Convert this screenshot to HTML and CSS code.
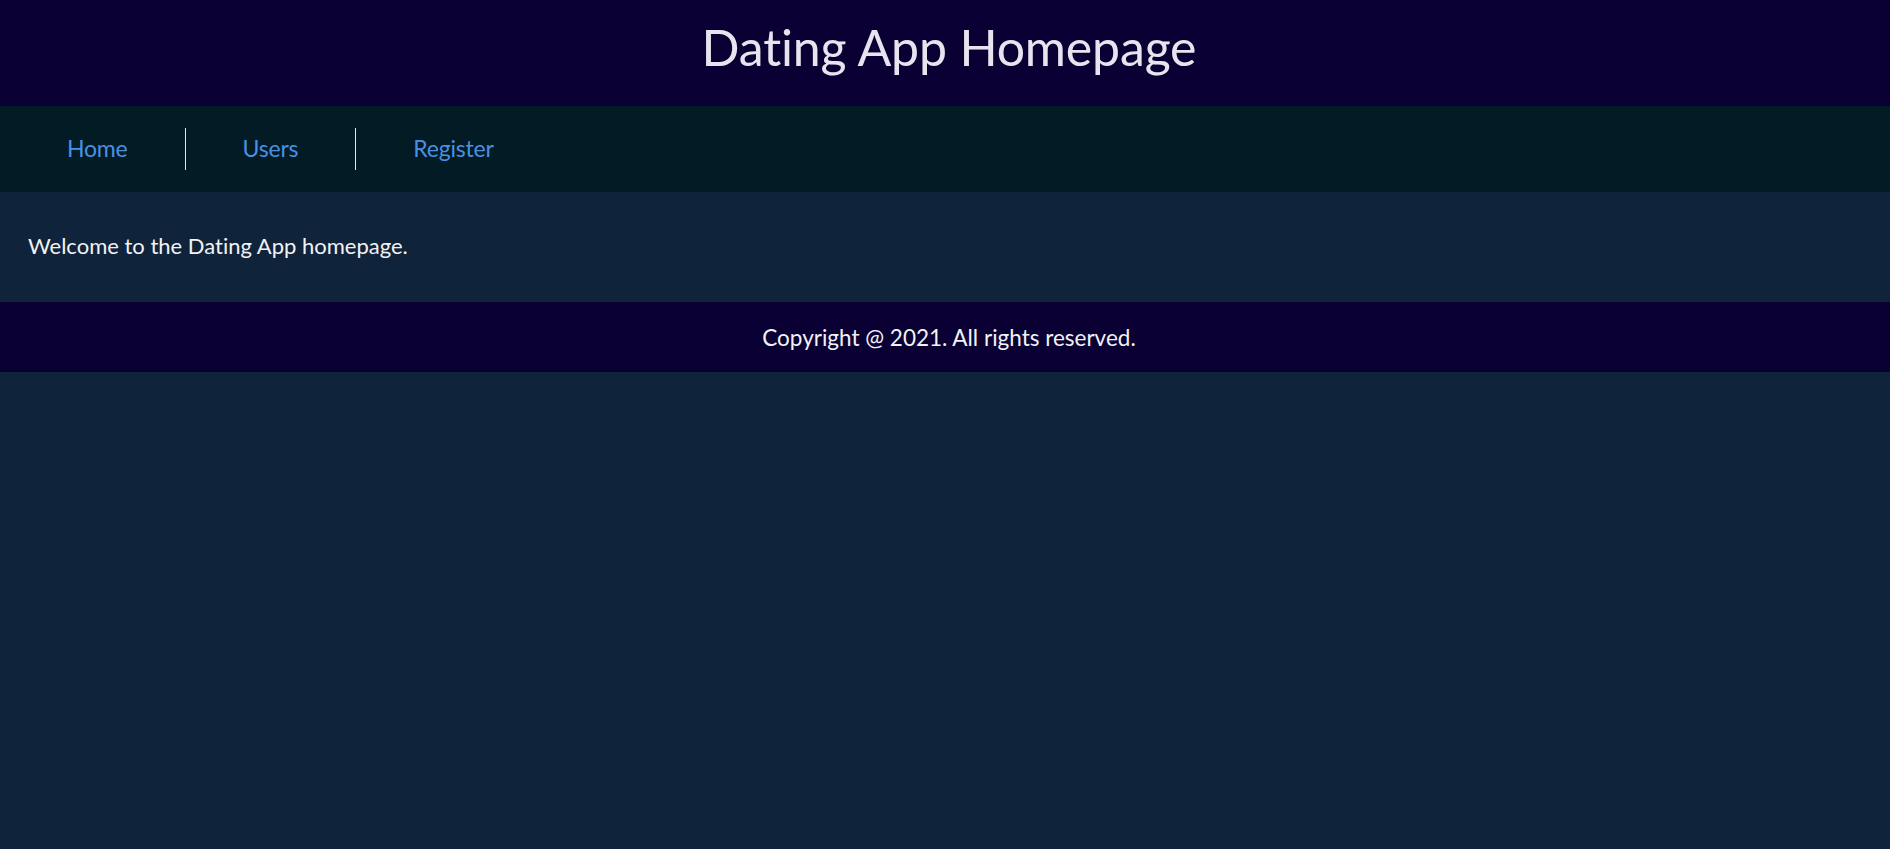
FILE: index.html
```html
<!DOCTYPE html>
<html lang="en">
<head>
<meta charset="utf-8">
<title>Dating App Homepage</title>
<link rel="stylesheet" href="styles.css">
</head>
<body>
<header class="site-header">
  <h1 class="site-title">Dating App Homepage</h1>
</header>
<nav class="site-nav">
  <ul class="nav-list">
    <li class="nav-item"><a class="nav-link" href="#">Home</a></li>
    <li class="nav-item"><a class="nav-link" href="#">Users</a></li>
    <li class="nav-item"><a class="nav-link" href="#">Register</a></li>
  </ul>
</nav>
<main class="site-main">
  <p class="welcome">Welcome to the Dating App homepage.</p>
</main>
<footer class="site-footer">
  <p class="copyright">Copyright @ 2021. All rights reserved.</p>
</footer>
</body>
</html>
```

FILE: styles.css
```css
html, body {
  margin: 0;
  padding: 0;
}
body {
  background: #0f243a;
  font-family: Lato, "Open Sans", sans-serif;
  font-variant-ligatures: none;
  color: #f2f2f5;
  min-height: 100vh;
}
.site-header {
  background: #0a0033;
  height: 106px;
  box-sizing: border-box;
  padding: 0 0 12px 8px;
  display: flex;
  align-items: center;
  justify-content: center;
}
.site-title {
  margin: 0;
  font-weight: 400;
  font-size: 50px;
  letter-spacing: -0.15px;
  color: #e8e4ef;
}
.site-nav {
  background: #021b25;
  height: 86px;
  display: flex;
  align-items: center;
}
.nav-list {
  list-style: none;
  margin: 0;
  padding: 0 0 0 10px;
  display: flex;
  align-items: center;
}
.nav-item {
  display: flex;
  align-items: center;
  height: 42px;
  padding: 0 57px;
}
.nav-item + .nav-item {
  border-left: 1px solid #e6e6e6;
}
.nav-link {
  color: #4a90e2;
  text-decoration: none;
  font-size: 23px;
  letter-spacing: -0.2px;
  position: relative;
  top: -1px;
}
.site-main {
  height: 110px;
  box-sizing: border-box;
  padding: 0 28px 4px;
  display: flex;
  align-items: center;
}
.welcome {
  margin: 0;
  font-size: 22px;
}
.site-footer {
  background: #0a0033;
  height: 70px;
  box-sizing: border-box;
  padding-left: 8px;
  display: flex;
  align-items: center;
  justify-content: center;
}
.copyright {
  margin: 0;
  font-size: 22.5px;
}
```
